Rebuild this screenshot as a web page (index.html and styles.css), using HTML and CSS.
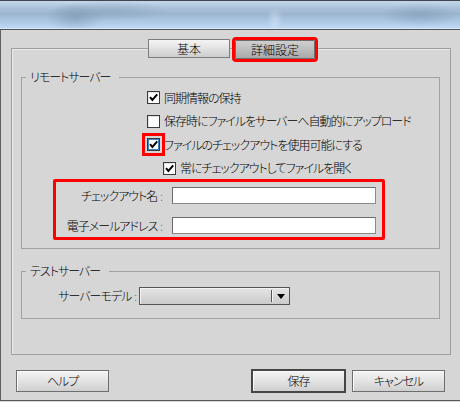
FILE: index.html
```html
<!DOCTYPE html>
<html lang="ja">
<head>
<meta charset="utf-8">
<title>サイトの設定</title>
<link rel="stylesheet" href="styles.css">
</head>
<body>
<div class="titlebar"></div>
<div class="dialog">
  <div class="panel">
    <div class="tabs">
      <div class="tab">基本</div>
      <div class="tab tab-active">詳細設定</div>
    </div>

    <fieldset class="group group-remote">
      <legend>リモートサーバー</legend>
      <div class="checks">
        <div class="check">
          <span class="box"><svg viewBox="0 0 11 11" class="tick"><polyline points="2,5.2 4.4,8 9.2,2.4"/></svg></span>
          <span>同期情報の保持</span>
        </div>
        <div class="check">
          <span class="box"></span>
          <span>保存時にファイルをサーバーへ自動的にアップロード</span>
        </div>
        <div class="check">
          <span class="box box-focus"><svg viewBox="0 0 11 11" class="tick"><polyline points="2,5.2 4.4,8 9.2,2.4"/></svg></span>
          <span>ファイルのチェックアウトを使用可能にする</span>
        </div>
        <div class="check check-indent">
          <span class="box"><svg viewBox="0 0 11 11" class="tick"><polyline points="2,5.2 4.4,8 9.2,2.4"/></svg></span>
          <span>常にチェックアウトしてファイルを開く</span>
        </div>
      </div>

      <div class="fields">
        <div class="field">
          <span class="flabel">チェックアウト名<span class="colon"> :</span></span>
          <span class="input"></span>
        </div>
        <div class="field">
          <span class="flabel">電子メールアドレス<span class="colon"> :</span></span>
          <span class="input"></span>
        </div>
      </div>
    </fieldset>

    <fieldset class="group group-test">
      <legend>テストサーバー</legend>
      <div class="model-row">
        <span class="mlabel">サーバーモデル<span class="colon"> :</span></span>
        <div class="select">
          <span class="select-value"></span>
          <span class="select-sep"></span>
          <span class="select-arrow"></span>
        </div>
      </div>
    </fieldset>
  </div>

  <div class="buttons">
    <button class="btn">ヘルプ</button>
    <span class="spacer"></span>
    <button class="btn btn-default">保存</button>
    <button class="btn">キャンセル</button>
  </div>
</div>
</body>
</html>
```

FILE: styles.css
```css
* { box-sizing: border-box; }

html, body {
  margin: 0;
  padding: 0;
  background: #d6d6d6;
  width: 460px;
  height: 402px;
  overflow: hidden;
}

body {
  font-family: "Noto Sans CJK JP", "Noto Sans", sans-serif;
  font-size: 12px;
  font-weight: 300;
  line-height: 14px;
  letter-spacing: -1px;
  color: #000;
  font-feature-settings: "palt" 1;
}

.titlebar {
  height: 29px;
  border-top: 1px solid #3e4652;
  border-bottom: 1px solid #d9e7f5;
  background:
    radial-gradient(ellipse 30px 14px at 75px 16px, rgba(120,145,172,0.55), rgba(120,145,172,0)),
    radial-gradient(ellipse 60px 10px at 110px 10px, rgba(130,155,180,0.45), rgba(130,155,180,0)),
    radial-gradient(ellipse 40px 12px at 420px 14px, rgba(120,145,175,0.45), rgba(120,145,175,0)),
    radial-gradient(ellipse 8px 14px at 275px 20px, rgba(210,228,245,0.6), rgba(210,228,245,0)),
    linear-gradient(to bottom, #c6d7e9 0%, #a9c0d8 28%, #9db6cf 48%, #aac6e2 72%, #bdd8f3 100%);
}

.dialog {
  border-top: 1px solid #4f555d;
  border-left: 1px solid #5e6266;
  border-bottom: 1px solid #5a5a5a;
  height: 372px;
}

.panel {
  margin: 18px 9px 0 10px;
  height: 307px;
  border: 1px solid #9e9e9e;
  box-shadow: inset 1px 1px 0 #ececec;
}

.tabs {
  display: flex;
  justify-content: center;
  align-items: flex-start;
  gap: 5px;
  margin-top: -10px;
  padding-left: 1px;
}

.tab {
  height: 19px;
  line-height: 17px;
  text-align: center;
  letter-spacing: 0;
  border: 1px solid #7d7d7d;
  background: linear-gradient(to bottom, #f4f4f4 0%, #e2e2e2 50%, #cdcdcd 100%);
  width: 82px;
}

.tab-active {
  width: 80px;
  margin-top: 1px;
  border-color: #6c6c6c;
  background: linear-gradient(to bottom, #cfcfcf 0%, #bdbdbd 50%, #a9a9a9 100%);
  outline: 3px solid #ff0000;
  outline-offset: 0;
  border-radius: 1px;
}

.group {
  margin: 0 10px 0 9px;
  padding: 0;
  border: 1px solid #a2a2a2;
  min-inline-size: 0;
}

.group legend {
  margin-left: 4px;
  padding: 0 9px 0 4px;
  line-height: 14px;
}

.group-remote {
  margin-top: 11px;
  padding-bottom: 8px;
}

.checks {
  padding: 2px 0 0 125px;
}

.check {
  height: 23.5px;
  display: flex;
  align-items: center;
}

.check-indent {
  padding-left: 16px;
}

.box {
  width: 13px;
  height: 13px;
  flex: none;
  border: 1px solid #3a3a3a;
  background: #fff;
  box-shadow: inset 1px 1px 0 #e4e4e4;
  margin-right: 4px;
  display: flex;
}

.box-focus {
  box-shadow: inset 0 0 0 1px #3f84c8;
  outline: 3px solid #ff0000;
  outline-offset: 2px;
  margin-right: 4px;
}

.tick {
  width: 11px;
  height: 11px;
  fill: none;
  stroke: #000;
  stroke-width: 2;
}

.fields {
  margin: -1px 0 0 31px;
  width: 332px;
  border: 3px solid #ff0000;
  border-radius: 2px;
  padding: 5px 6px 3px 0;
  display: flex;
  flex-direction: column;
  gap: 13px;
}

.field {
  display: flex;
  align-items: center;
  height: 17px;
}

.flabel {
  width: 107px;
  text-align: right;
  white-space: nowrap;
}

.colon {
  color: #2a67a3;
  letter-spacing: 0;
}

.input {
  margin-left: 9px;
  width: 204px;
  height: 17px;
  background: #fff;
  border: 1px solid #6c6c6c;
  border-bottom-color: #8a8a8a;
  border-right-color: #8a8a8a;
}

.group-test {
  margin-top: 15px;
  padding: 9px 0 13px 0;
}

.model-row {
  display: flex;
  align-items: center;
}

.mlabel {
  width: 115px;
  text-align: right;
  white-space: nowrap;
}

.select {
  margin-left: 2px;
  width: 151px;
  height: 18px;
  border: 1px solid #555;
  background: linear-gradient(to bottom, #e4e4e4 0%, #d8d8d8 50%, #cacaca 100%);
  box-shadow: inset 1px 1px 0 #f2f2f2;
  display: flex;
  align-items: center;
}

.select-value {
  flex: 1;
}

.select-sep {
  width: 2px;
  height: 12px;
  border-left: 1px solid #555;
  border-right: 1px solid #f4f4f4;
}

.select-arrow {
  width: 16px;
  height: 16px;
  display: flex;
  align-items: center;
  justify-content: center;
}

.select-arrow::before {
  content: "";
  width: 0;
  height: 0;
  border-left: 4px solid transparent;
  border-right: 4px solid transparent;
  border-top: 5px solid #000;
  margin-top: 1px;
}

.buttons {
  display: flex;
  align-items: center;
  gap: 7px;
  margin-top: 15px;
  padding: 0 15px;
}

.spacer {
  flex: 1;
}

.btn {
  width: 93px;
  height: 22px;
  padding: 0;
  margin: 0;
  font: inherit;
  letter-spacing: -1px;
  font-feature-settings: "palt" 1;
  line-height: 20px;
  color: #000;
  border: 1px solid #6e6e6e;
  border-radius: 0;
  background: linear-gradient(to bottom, #f3f3f3 0%, #e3e3e3 50%, #cfcfcf 100%);
  box-shadow: inset 1px 1px 0 #fafafa;
}

.btn-default {
  border-color: #464646;
  outline: 1px solid #464646;
  outline-offset: 0;
}
```
